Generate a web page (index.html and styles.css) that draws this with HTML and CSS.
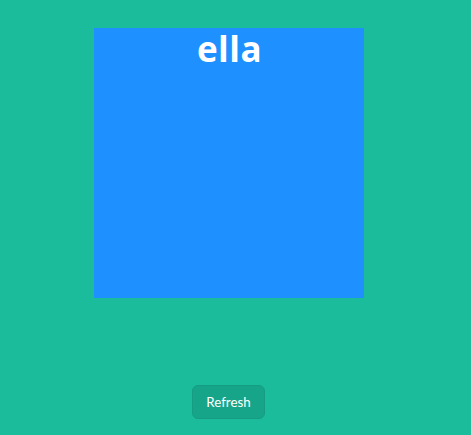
FILE: index.html
```html
<!DOCTYPE html>
<html>
<head>
<meta charset="utf-8">
<link rel="stylesheet" href="styles.css">
</head>
<body>
<div class="page">
  <div class="card">
    <h1 class="name">ella</h1>
  </div>
  <button class="refresh">Refresh</button>
</div>
</body>
</html>
```
FILE: styles.css
```css
html, body {
  margin: 0;
  padding: 0;
  background: #1abc9c;
  height: 100%;
}
.page {
  display: flex;
  flex-direction: column;
  align-items: flex-start;
  padding-top: 28px;
  padding-left: 94px;
}
.card {
  width: 270px;
  height: 270px;
  background: #1e90ff;
  display: flex;
  justify-content: center;
  align-items: flex-start;
}
.name {
  margin: 0;
  padding-left: 1px;
  font-family: "Open Sans", sans-serif;
  font-weight: 700;
  font-size: 35px;
  line-height: 41px;
  color: #ffffff;
  letter-spacing: 0.5px;
}
.refresh {
  margin-top: 87px;
  margin-left: 98px;
  width: 73px;
  height: 34px;
  background: #17a589;
  border: 1px solid #169c82;
  border-radius: 6px;
  color: #ffffff;
  font-family: Lato, sans-serif;
  font-size: 13.3px;
  padding: 0;
}
```
